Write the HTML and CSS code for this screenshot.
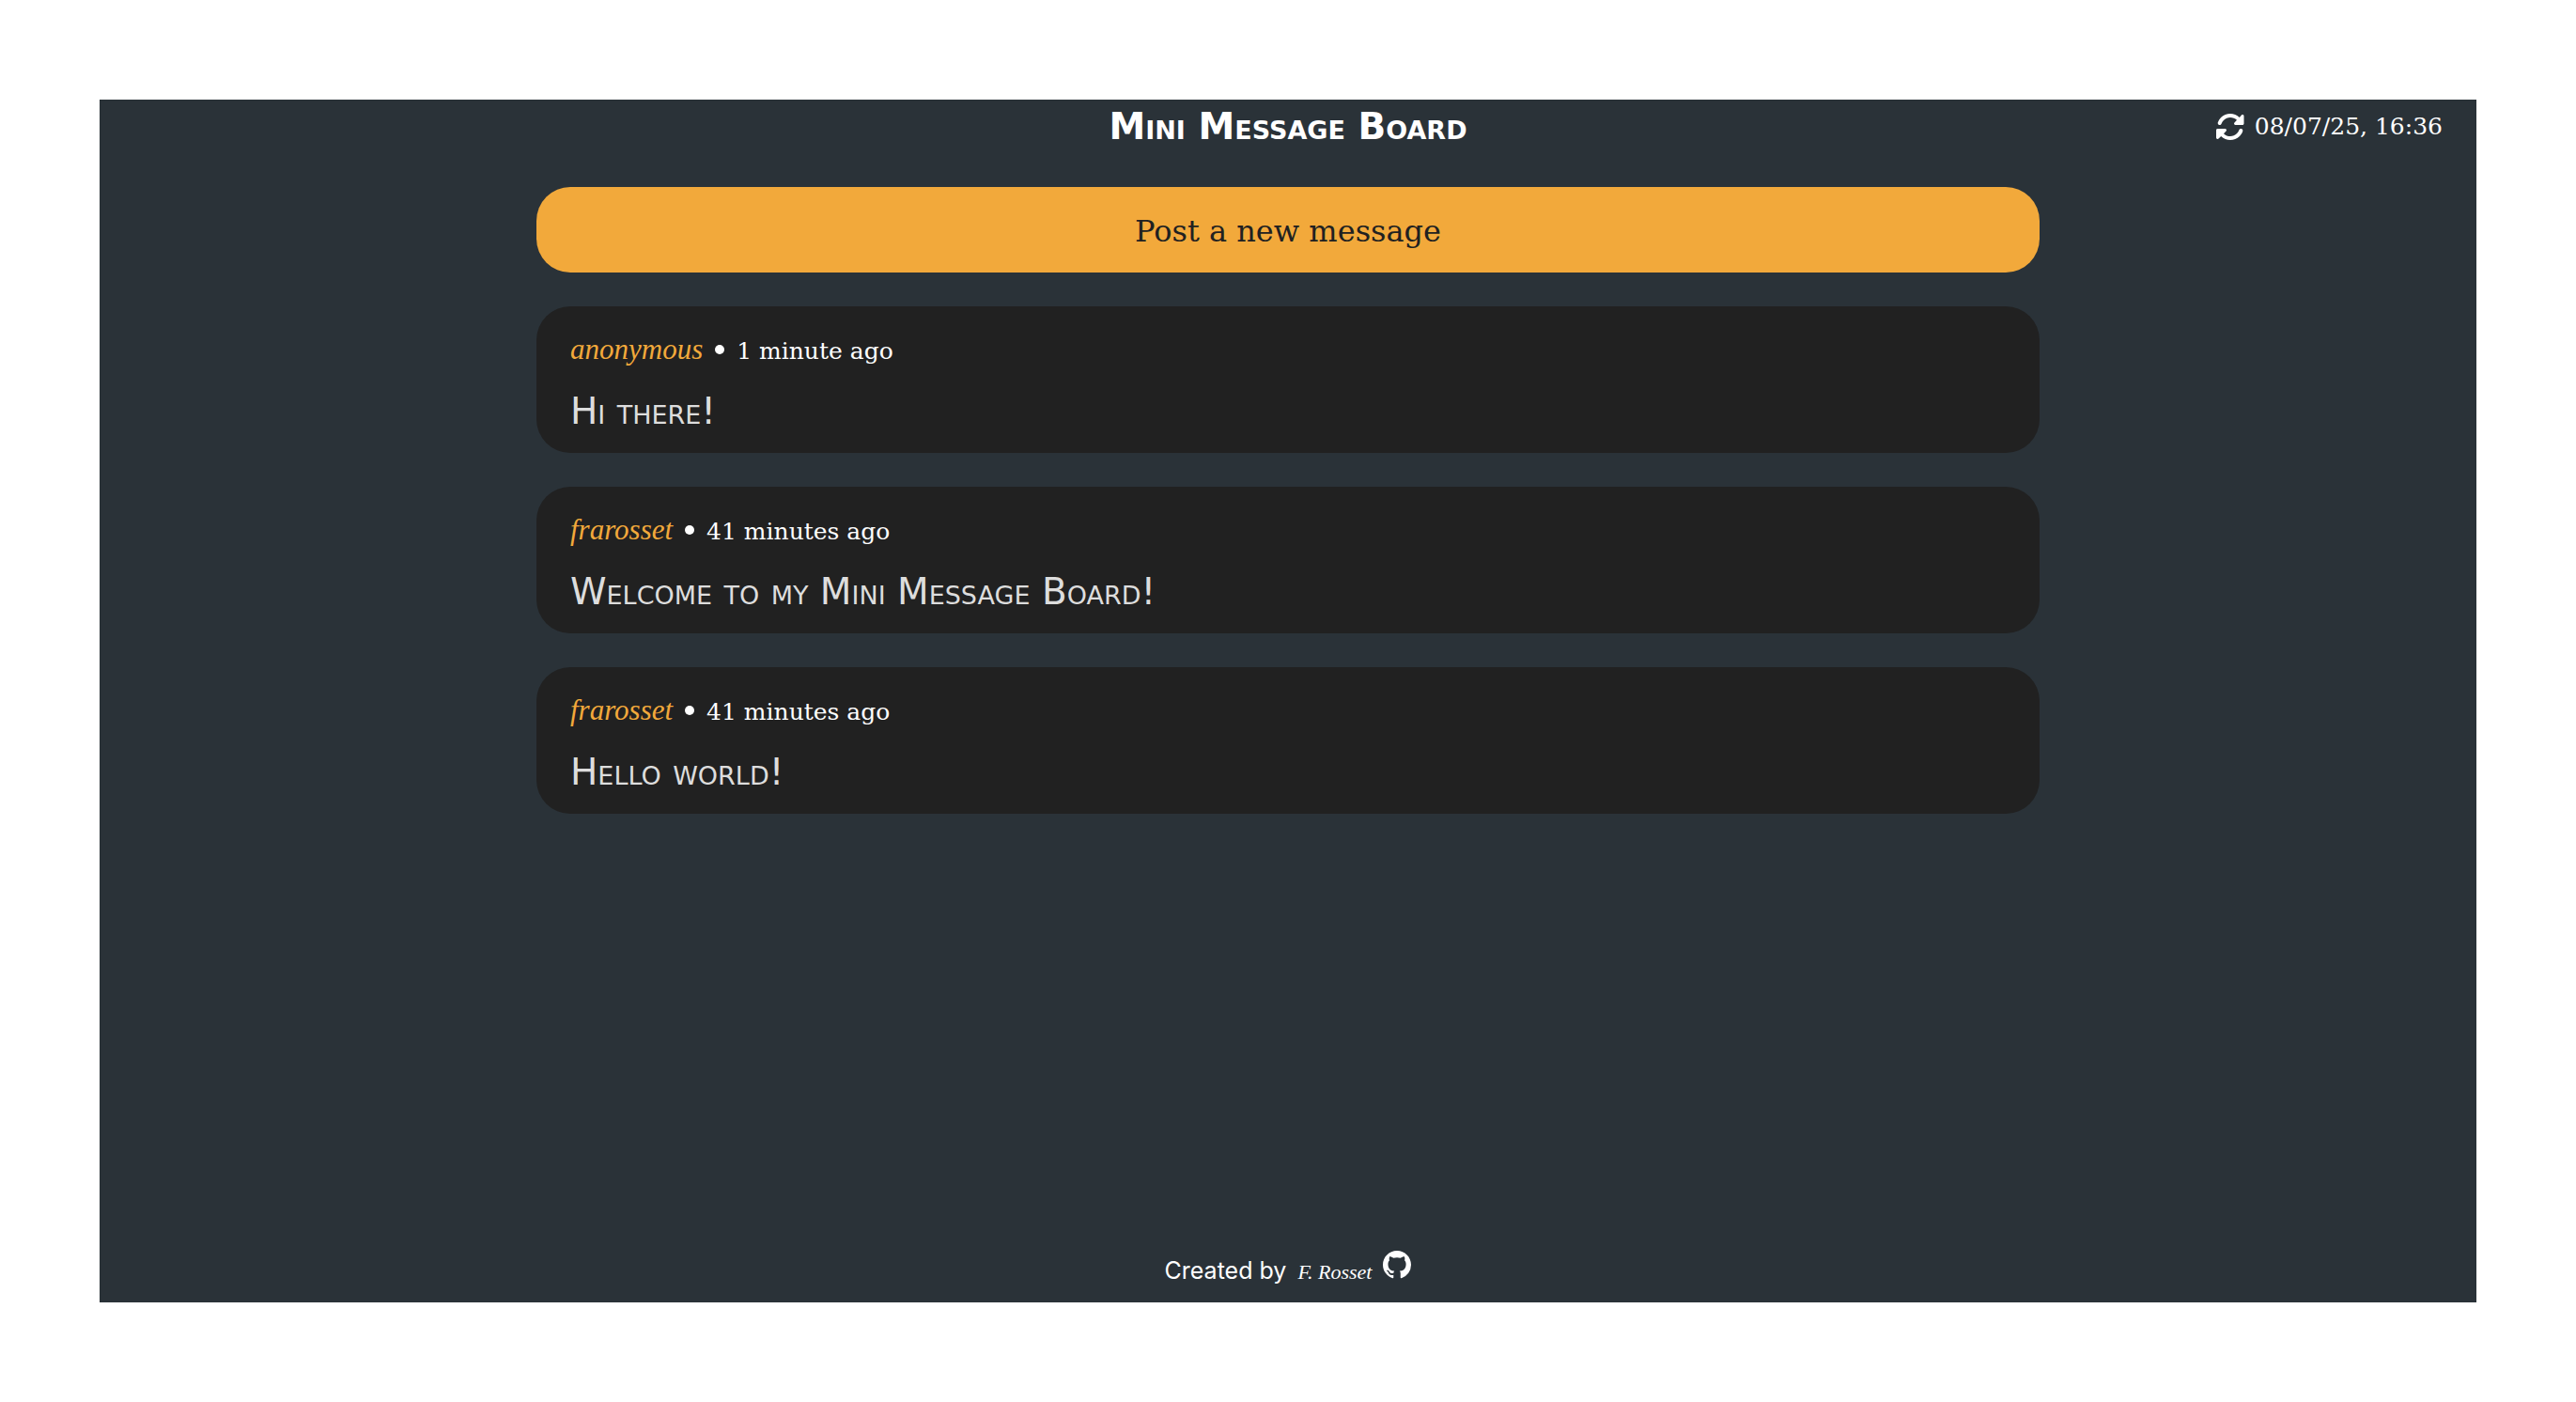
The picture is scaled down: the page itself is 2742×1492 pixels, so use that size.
FILE: index.html
```html
<!DOCTYPE html>
<html lang="en">
<head>
<meta charset="utf-8">
<meta name="viewport" content="width=device-width, initial-scale=1">
<title>Mini Message Board</title>
<link rel="stylesheet" href="styles.css">
</head>
<body>
<div class="app">
  <header class="header">
    <h1 class="title">Mini Message Board</h1>
    <div class="updated">
      <button class="refresh" type="button" aria-label="Refresh">
        <svg class="icon" viewBox="0 0 512 512" aria-hidden="true"><path d="M142.9 142.9c62.2-62.2 162.7-62.5 225.3-1L327 183c-6.9 6.9-8.9 17.2-5.2 26.2s12.5 14.8 22.2 14.8l119.5 0 .5 0c13.3 0 24-10.7 24-24l0-128c0-9.7-5.8-18.5-14.8-22.2s-19.3-1.7-26.2 5.2L413.4 96.6c-87.6-86.5-228.7-86.2-315.8 1C73.2 122 55.6 150.7 44.8 181.4c-5.9 16.7 2.9 34.9 19.5 40.8s34.9-2.9 40.8-19.5c7.7-21.8 20.2-42.3 37.8-59.8zM16 312l0 7.6 0 .7L16 440c0 9.7 5.8 18.5 14.8 22.2s19.3 1.7 26.2-5.2l41.6-41.6c87.6 86.5 228.7 86.2 315.8-1c24.4-24.4 42.1-53.1 52.9-83.7c5.9-16.7-2.9-34.9-19.5-40.8s-34.9 2.9-40.8 19.5c-7.7 21.8-20.2 42.3-37.8 59.8c-62.2 62.2-162.7 62.5-225.3 1L185 329c6.9-6.9 8.9-17.2 5.2-26.2s-12.5-14.8-22.2-14.8L48.4 288l-.7 0L40 288c-13.3 0-24 10.7-24 24z"/></svg>
      </button>
      <time datetime="2025-07-08T16:36">08/07/25, 16:36</time>
    </div>
  </header>

  <main class="board">
    <button class="post" type="button">Post a new message</button>
    <article class="message">
      <p class="meta"><span class="author">anonymous</span><span class="dot"></span><span class="age">1 minute ago</span></p>
      <p class="text">Hi there!</p>
    </article>
    <article class="message">
      <p class="meta"><span class="author">frarosset</span><span class="dot"></span><span class="age">41 minutes ago</span></p>
      <p class="text">Welcome to my Mini Message Board!</p>
    </article>
    <article class="message">
      <p class="meta"><span class="author">frarosset</span><span class="dot"></span><span class="age">41 minutes ago</span></p>
      <p class="text">Hello world!</p>
    </article>
  </main>

  <footer class="footer">
    <span>Created by</span>
    <a class="credit" href="#"><span class="signature">F. Rosset</span>
      <svg class="github" viewBox="0 0 16 16" aria-hidden="true"><path d="M8 0C3.58 0 0 3.58 0 8c0 3.54 2.29 6.53 5.47 7.59.4.07.55-.17.55-.38 0-.19-.01-.82-.01-1.49-2.01.37-2.53-.49-2.69-.94-.09-.23-.48-.94-.82-1.13-.28-.15-.68-.52-.01-.53.63-.01 1.08.58 1.23.82.72 1.21 1.87.87 2.33.66.07-.52.28-.87.51-1.07-1.78-.2-3.64-.89-3.64-3.95 0-.87.31-1.59.82-2.15-.08-.2-.36-1.02.08-2.12 0 0 .67-.21 2.2.82.64-.18 1.32-.27 2-.27s1.36.09 2 .27c1.53-1.04 2.2-.82 2.2-.82.44 1.1.16 1.92.08 2.12.51.56.82 1.27.82 2.15 0 3.07-1.87 3.75-3.65 3.95.29.25.54.73.54 1.48 0 1.07-.01 1.93-.01 2.2 0 .21.15.46.55.38A8.01 8.01 0 0 0 16 8c0-4.42-3.58-8-8-8z"/></svg>
    </a>
  </footer>
</div>
</body>
</html>
```
FILE: styles.css
```css
* {
  box-sizing: border-box;
}

body {
  margin: 0;
  padding: 106px;
  background: #fff;
  color: #fff;
  font-family: "DejaVu Serif", serif;
  font-size: 25px;
}

h1,
p {
  margin: 0;
}

button {
  border: 0;
  font: inherit;
  cursor: pointer;
}

svg {
  display: block;
  fill: currentColor;
}

.app {
  display: flex;
  flex-direction: column;
  min-height: calc(100vh - 212px);
  background: #2a3238;
}

.header {
  display: grid;
  grid-template-columns: 1fr auto 1fr;
  align-items: center;
  height: 57px;
  padding: 0 36px;
}

.title {
  grid-column: 2;
  font-family: "DejaVu Sans", sans-serif;
  font-size: 39px;
  font-weight: 700;
  font-variant: small-caps;
  line-height: 56px;
}

.updated {
  display: flex;
  justify-content: flex-end;
  align-items: center;
  gap: 10px;
}

.refresh {
  padding: 0;
  background: none;
  color: inherit;
}

.icon {
  width: 32px;
  height: 32px;
}

.board {
  display: flex;
  flex-direction: column;
  flex: 1;
  gap: 36px;
  width: 100%;
  max-width: 1600px;
  margin: 36px auto;
}

.post {
  padding: 22px 36px 18px;
  border-radius: 36px;
  background: #f2a93b;
  color: #212121;
  font-size: 32px;
  line-height: 51px;
}

.message {
  padding: 18px 36px 12px;
  border-radius: 36px;
  background: #212121;
}

.meta {
  display: flex;
  align-items: baseline;
  height: 56px;
  margin-bottom: 6px;
  line-height: 56px;
}

.author {
  color: #f2a93b;
  font-family: "Liberation Serif", serif;
  font-size: 31px;
  font-style: italic;
}

.dot {
  align-self: center;
  width: 10px;
  height: 10px;
  margin: 0 13px;
  border-radius: 50%;
  background: #fff;
}

.text {
  color: #ddd;
  font-family: "DejaVu Sans", sans-serif;
  font-size: 39px;
  font-variant: small-caps;
  line-height: 64px;
}

.footer {
  display: flex;
  justify-content: center;
  align-items: baseline;
  gap: 12px;
  padding-bottom: 12px;
  font-family: Inter, sans-serif;
  line-height: 40px;
}

.credit {
  display: flex;
  align-items: baseline;
  gap: 12px;
  color: inherit;
  text-decoration: none;
}

.signature {
  font-family: "Liberation Serif", serif;
  font-size: 22px;
  font-style: italic;
}

.github {
  width: 30px;
  height: 30px;
}
```
